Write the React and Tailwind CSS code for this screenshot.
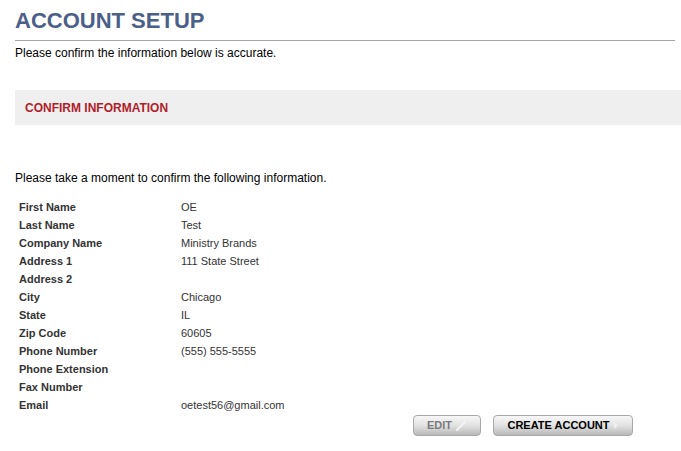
import React from 'react';

const rows = [
  ['First Name', 'OE'],
  ['Last Name', 'Test'],
  ['Company Name', 'Ministry Brands'],
  ['Address 1', '111 State Street'],
  ['Address 2', ''],
  ['City', 'Chicago'],
  ['State', 'IL'],
  ['Zip Code', '60605'],
  ['Phone Number', '(555) 555-5555'],
  ['Phone Extension', ''],
  ['Fax Number', ''],
  ['Email', 'oetest56@gmail.com'],
];

const App = () => {
  return (
    <div className="w-[681px] h-[451px] overflow-hidden bg-white font-['Liberation_Sans',Arial,sans-serif]">
      <div className="pl-[15px] pt-[8px]">
        {/* Page title */}
        <h1 className="text-[22px] leading-[26px] font-bold text-[#4b6088]">ACCOUNT SETUP</h1>
        <div className="w-[660px] h-px bg-[#a3a7ab] mt-[6px]" />
        <p className="text-[12px] leading-[14px] text-black mt-[5px]">
          Please confirm the information below is accurate.
        </p>

        {/* Section header */}
        <div className="w-[666px] h-[35px] mt-[30px] bg-[#efefef] flex items-center pl-[10px]">
          <span className="text-[12px] font-bold text-[#b0202a]">CONFIRM INFORMATION</span>
        </div>

        <p className="text-[12px] leading-[14px] text-black mt-[46px]">
          Please take a moment to confirm the following information.
        </p>

        {/* Info table */}
        <div className="mt-[13px] pl-[4px] flex flex-col">
          {rows.map(([label, value]) => (
            <div key={label} className="flex h-[18px] items-center text-[11px] text-[#333]">
              <div className="w-[162px] font-bold">{label}</div>
              <div>{value}</div>
            </div>
          ))}
        </div>

        {/* Actions */}
        <div className="w-[618px] flex justify-end gap-[12px] mt-[1px]">
          <button className="w-[68px] h-[21px] rounded-[4px] border border-[#a8a8a8] bg-gradient-to-b from-[#f7f7f7] via-[#e2e2e2] to-[#b9b9b9] flex items-center justify-center gap-[3px] text-[11px] font-bold text-[#7a7a7a]">
            <span>EDIT</span>
            <svg width="12" height="10" viewBox="0 0 12 10">
              <path d="M2 9 L10 1" stroke="#f4f4f4" strokeWidth="2" strokeLinecap="round" />
            </svg>
          </button>
          <button className="w-[140px] h-[21px] rounded-[4px] border border-[#a8a8a8] bg-gradient-to-b from-[#f7f7f7] via-[#e2e2e2] to-[#b9b9b9] flex items-center justify-center gap-[3px] text-[11px] font-bold text-black">
            <span>CREATE ACCOUNT</span>
            <svg width="6" height="9" viewBox="0 0 6 9">
              <path d="M1 1 L5 4.5 L1 8 Z" fill="#f0f0f0" />
            </svg>
          </button>
        </div>
      </div>
    </div>
  );
};

export default App;
